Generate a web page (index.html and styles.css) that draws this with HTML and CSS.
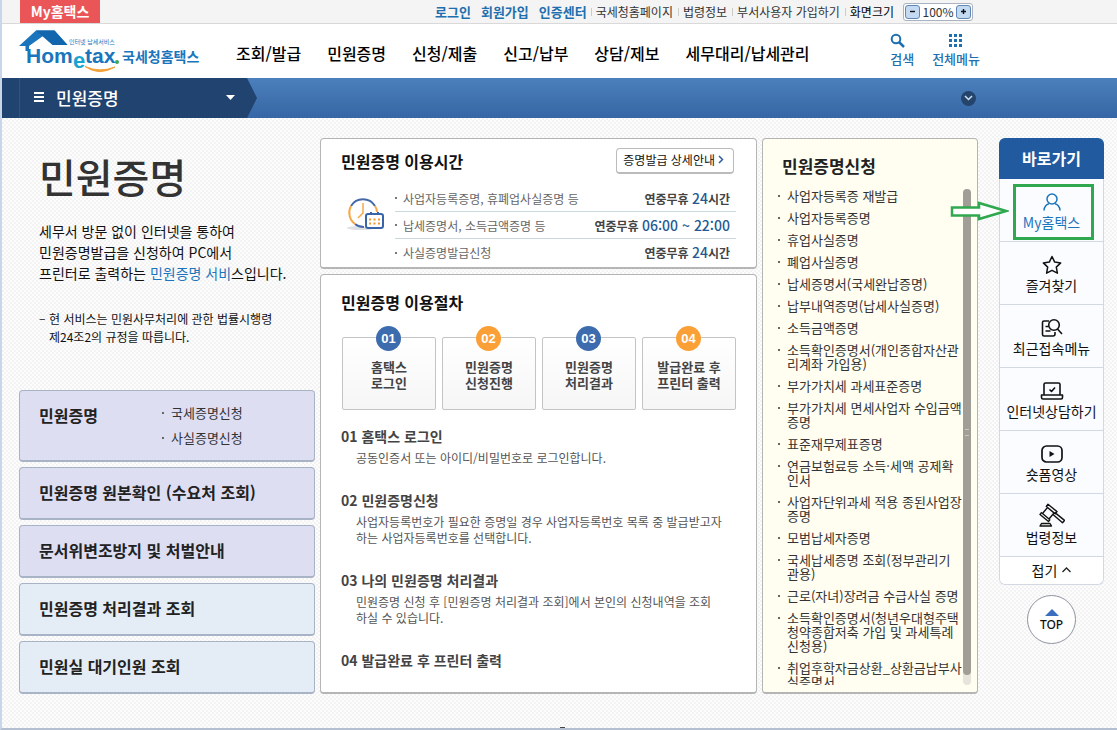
FILE: index.html
```html
<!DOCTYPE html>
<html lang="ko">
<head>
<meta charset="utf-8">
<title>국세청홈택스 - 민원증명</title>
<link rel="stylesheet" href="styles.css">
</head>
<body>
<div class="topbar">
  <a class="my-tab" href="#">My홈택스</a>
  <div class="top-links">
    <a class="strong" href="#">로그인</a>
    <a class="strong" href="#">회원가입</a>
    <a class="strong" href="#">인증센터</a>
    <a class="sep" href="#">국세청홈페이지</a>
    <a class="sep" href="#">법령정보</a>
    <a class="sep" href="#">부서사용자 가입하기</a>
    <span class="sep dark">화면크기</span>
    <div class="zoom">
      <button type="button" aria-label="축소"><svg width="7" height="7"><path d="M1 3.500h5" stroke="#111" stroke-width="1.400"/></svg></button>
      <span>100%</span>
      <button type="button" aria-label="확대"><svg width="7" height="7"><path d="M1 3.500h5M3.500 1v5" stroke="#111" stroke-width="1.400"/></svg></button>
    </div>
  </div>
</div>

<header class="header">
  <a class="logo" href="#" aria-label="국세청홈택스">
    <svg width="180" height="46" viewBox="0 0 180 46">
      <path d="M0 18 17 2.500h18.500L48.500 17H34L24 8 10 18v5H6.500v-5z" fill="#1a75bd"/>
      <path d="M17 2.500h18.500L48.500 17H33.500z" fill="#1166ae"/>
      <text x="50" y="16" class="lg-tag">인터넷 납세서비스</text>
      <text x="7" y="35" class="lg-home">Hom</text>
      <text x="54" y="40" class="lg-e">e</text>
      <text x="66" y="35" class="lg-home">tax</text>
      <circle cx="98" cy="34" r="2" fill="#3aa757"/>
      <path d="M66 38.500Q80 48.500 96 39 81 45 66 38.500z" fill="#f2a13a" stroke="#f2a13a"/>
      <text x="103" y="34" class="lg-kr">국세청홈택스</text>
    </svg>
  </a>
  <nav class="gnb">
    <a href="#">조회/발급</a><a href="#">민원증명</a><a href="#">신청/제출</a><a href="#">신고/납부</a><a href="#">상담/제보</a><a href="#">세무대리/납세관리</a>
  </nav>
  <div class="tools">
    <a href="#"><svg width="16" height="16" viewBox="0 0 16 16" fill="none" stroke="#1f6fae"><circle cx="6" cy="6" r="4.300" stroke-width="2"/><path d="M9 9l5 5" stroke-width="2.500"/></svg>검색</a>
    <a href="#"><svg width="16" height="16" viewBox="0 0 16 16" fill="#1f6fae"><path d="M1 1h3v3H1zM6 1h3v3H6zM11 1h3v3h-3zM1 6h3v3H1zM6 6h3v3H6zM11 6h3v3h-3zM1 11h3v3H1zM6 11h3v3H6zM11 11h3v3h-3z"/></svg>전체메뉴</a>
  </div>
</header>

<div class="subbar">
  <button class="lnb" type="button">
    <svg width="12" height="12" viewBox="0 0 12 12"><path d="M1 2h10M1 6h10M1 10h10" stroke="#fff" stroke-width="2"/></svg>
    <span>민원증명</span>
    <svg width="9" height="5" viewBox="0 0 9 5"><path d="M0 0h9L4.500 5z" fill="#fff"/></svg>
  </button>
  <button class="expand" type="button" aria-label="펼치기"><svg width="9" height="6" viewBox="0 0 9 6" fill="none"><path d="M1 1l3.500 3.500L8 1" stroke="#cfe0f2" stroke-width="1.500"/></svg></button>
</div>

<div class="page">
  <main class="board">
    <section class="left">
      <h1>민원증명</h1>
      <p class="intro">세무서 방문 없이 인터넷을 통하여<br>민원증명발급을 신청하여 PC에서<br>프린터로 출력하는 <em>민원증명 서비</em>스입니다.</p>
      <p class="law">현 서비스는 민원사무처리에 관한 법률시행령<br>제24조2의 규정을 따릅니다.</p>
      <div class="menu">
        <div class="tile tall">
          <a href="#">민원증명</a>
          <ul class="dots"><li><a href="#">국세증명신청</a></li><li><a href="#">사실증명신청</a></li></ul>
        </div>
        <a class="tile" href="#">민원증명 원본확인 (수요처 조회)</a>
        <a class="tile" href="#">문서위변조방지 및 처벌안내</a>
        <a class="tile blue" href="#">민원증명 처리결과 조회</a>
        <a class="tile blue" href="#">민원실 대기인원 조회</a>
      </div>
    </section>

    <div class="middle">
      <section class="card hours">
        <div class="card-head">
          <h2>민원증명 이용시간</h2>
          <button class="more" type="button">증명발급 상세안내<svg width="6" height="9" viewBox="0 0 6 9" fill="none"><path d="M1 1l3.500 3.500L1 8" stroke="#2d5f9e" stroke-width="1.500"/></svg></button>
        </div>
        <div class="hours-body">
          <svg class="clock" width="38" height="34" viewBox="0 0 38 34" fill="none">
            <ellipse cx="14" cy="31" rx="14" ry="2" fill="#dde1e6"/>
            <circle cx="16" cy="16" r="14" fill="#fff"/>
            <path d="M4 9A14 14 0 0 1 28 9M17 30a14 14 0 0 1-9-3" stroke="#4468a8" stroke-width="2"/>
            <path d="M28 9q2 3 2 6M4 9a14 14 0 0 0 4 18" stroke="#f5a94a" stroke-width="2"/>
            <path d="M16 6v10l-5 5" stroke="#f5a94a" stroke-width="1.500"/>
            <rect x="19" y="17" width="17" height="14" rx="2" fill="#fff" stroke="#3a64a8" stroke-width="2"/>
            <path d="M24 15v3M31 15v3" stroke="#3a64a8" stroke-width="2"/>
            <path d="M22 22.500h11M22 26.500h11" stroke="#f09a35" stroke-width="2" stroke-dasharray="2 2.500"/>
          </svg>
          <ul class="rows">
            <li><span class="name">사업자등록증명, 휴폐업사실증명 등</span><span class="time">연중무휴 <b>24</b>시간</span></li>
            <li><span class="name">납세증명서, 소득금액증명 등</span><span class="time">연중무휴 <b>06:00 ~ 22:00</b></span></li>
            <li><span class="name">사실증명발급신청</span><span class="time">연중무휴 <b>24</b>시간</span></li>
          </ul>
        </div>
      </section>

      <section class="card process">
        <h2>민원증명 이용절차</h2>
        <ol class="steps">
          <li><i>01</i>홈택스<br>로그인</li>
          <li class="orange"><i>02</i>민원증명<br>신청진행</li>
          <li><i>03</i>민원증명<br>처리결과</li>
          <li class="orange"><i>04</i>발급완료 후<br>프린터 출력</li>
        </ol>
        <div class="guide">
          <div><h3>01 홈택스 로그인</h3><p>공동인증서 또는 아이디/비밀번호로 로그인합니다.</p></div>
          <div><h3>02 민원증명신청</h3><p>사업자등록번호가 필요한 증명일 경우 사업자등록번호 목록 중 발급받고자<br>하는 사업자등록번호를 선택합니다.</p></div>
          <div><h3>03 나의 민원증명 처리결과</h3><p>민원증명 신청 후 [민원증명 처리결과 조회]에서 본인의 신청내역을 조회<br>하실 수 있습니다.</p></div>
          <div><h3>04 발급완료 후 프린터 출력</h3></div>
        </div>
      </section>
    </div>

    <section class="card apply">
      <h2>민원증명신청</h2>
      <div class="scroller">
        <ul class="dots">
          <li><a href="#">사업자등록증 재발급</a></li>
          <li><a href="#">사업자등록증명</a></li>
          <li><a href="#">휴업사실증명</a></li>
          <li><a href="#">폐업사실증명</a></li>
          <li><a href="#">납세증명서(국세완납증명)</a></li>
          <li><a href="#">납부내역증명(납세사실증명)</a></li>
          <li><a href="#">소득금액증명</a></li>
          <li><a href="#">소득확인증명서(개인종합자산관<br>리계좌 가입용)</a></li>
          <li><a href="#">부가가치세 과세표준증명</a></li>
          <li><a href="#">부가가치세 면세사업자 수입금액<br>증명</a></li>
          <li><a href="#">표준재무제표증명</a></li>
          <li><a href="#">연금보험료등 소득·세액 공제확<br>인서</a></li>
          <li><a href="#">사업자단위과세 적용 종된사업장<br>증명</a></li>
          <li><a href="#">모범납세자증명</a></li>
          <li><a href="#">국세납세증명 조회(정부관리기<br>관용)</a></li>
          <li><a href="#">근로(자녀)장려금 수급사실 증명</a></li>
          <li><a href="#">소득확인증명서(청년우대형주택<br>청약종합저축 가입 및 과세특례<br>신청용)</a></li>
          <li><a href="#">취업후학자금상환_상환금납부사<br>실증명서</a></li>
        </ul>
        <div class="track"><div class="thumb"></div></div>
      </div>
    </section>
  </main>

  <aside class="quick">
    <div class="quick-box">
      <h2>바로가기</h2>
      <a class="on" href="#">
        <svg width="20" height="20" viewBox="0 0 20 20" fill="none" stroke="#1b75bc" stroke-width="1.500"><circle cx="10" cy="7" r="5"/><path d="M2 18.500c0-4 3-6.500 5-6.800M18 18.500c0-4-3-6.500-5-6.800"/></svg>My홈택스
        <svg class="arrow" width="59" height="22" viewBox="0 0 59 22"><path d="M2 7.500h27V3l27 8-27 8v-3.500H2z" fill="#fff" stroke="#2fa84f" stroke-width="2.500"/></svg>
        <span class="mark"></span>
      </a>
      <a href="#"><svg width="20" height="20" viewBox="0 0 20 20" fill="none" stroke="#111" stroke-width="1.500" stroke-linejoin="round"><path d="M10 1.500l2.700 5.600 6 .8-4.400 4.200 1.100 6.100L10 15.300l-5.400 2.900 1.100-6.100L1.300 7.900l6-.8z"/></svg>즐겨찾기</a>
      <a href="#"><svg width="22" height="20" viewBox="0 0 22 20" fill="none" stroke="#111" stroke-width="1.600"><path d="M8 3H3Q1.500 3 1.500 4.500v12Q1.500 18 3 18h9q2 0 2-2v-2"/><circle cx="13" cy="7" r="5.300"/><path d="M16.500 11l4.500 5M4.500 8.500h3M4.500 13h5"/></svg>최근접속메뉴</a>
      <a href="#"><svg width="24" height="20" viewBox="0 0 24 20" fill="none" stroke="#111" stroke-width="1.600" stroke-linejoin="round"><path d="M4 14V3.500Q4 2 5.500 2h13Q20 2 20 3.500V14M1.500 14h21v2.500q0 1.500-1.500 1.500H3q-1.500 0-1.500-1.500zM9.500 8.500l2 2L15 6.500"/></svg>인터넷상담하기</a>
      <a href="#"><svg width="22" height="20" viewBox="0 0 22 20" fill="none" stroke="#111" stroke-width="1.700"><rect x="1" y="2" width="20" height="16" rx="4.500"/><path d="M8.500 7v6l5-3z" fill="#111" stroke="none"/></svg>숏폼영상</a>
      <a href="#"><svg width="26" height="24" viewBox="0 0 26 24" fill="none" stroke="#111" stroke-width="1.400" stroke-linejoin="round"><path d="M8.500 4.500l-5 6 6.500 5.500 5-6zM7.300 3.500L9 1.300l9 7.300-1.700 2.200zM2.800 9.300L1 11.500l8.500 7 1.700-2.200M14 11.500l9.500 8.300 2-2.400-9.800-8M2.500 20.500h8.500L12.500 23H1z"/></svg>법령정보</a>
      <button class="fold" type="button">접기<svg width="9" height="6" viewBox="0 0 9 6" fill="none"><path d="M.5 5l4-4 4 4" stroke="#222" stroke-width="1.300"/></svg></button>
    </div>
    <a class="top" href="#"><svg width="14" height="7" viewBox="0 0 14 7"><path d="M0 7l7-7 7 7z" fill="#3a6fc0"/></svg>TOP</a>
  </aside>
</div>
<span class="grip"></span>
</body>
</html>
```
FILE: styles.css
```css
* { box-sizing: border-box; }
html { background: #f8f8f8; }
body {
  position: relative;
  margin: 0;
  min-height: 100vh;
  display: flex;
  flex-direction: column;
  border-left: 2px solid #c9d5e8;
  border-bottom: 2px solid #b4bfd1;
  font-family: "Noto Sans CJK KR", sans-serif;
  font-size: 12px;
  color: #111;
  background-color: #fdfdfd;
  background-image: conic-gradient(#f3f3f3 25%, transparent 0 50%, #f3f3f3 0 75%, transparent 0);
  background-size: 4px 4px;
}
a { color: inherit; text-decoration: none; }
h1, h2, h3, p, ul, ol { margin: 0; padding: 0; }
ul, ol { list-style: none; }
button { font: inherit; color: inherit; padding: 0; border: 0; background: none; cursor: pointer; }
svg { flex: none; }

.topbar {
  display: flex;
  justify-content: space-between;
  height: 24px;
  padding: 0 144px 0 18px;
  background: #f4f4f4;
  border-bottom: 1px solid #d9d9d9;
}
.my-tab {
  width: 80px;
  background: #ea5658;
  color: #fff;
  font-size: 14px;
  font-weight: 700;
  line-height: 22px;
  text-align: center;
}
.top-links { display: flex; align-items: center; line-height: 20px; color: #333; white-space: nowrap; }
.strong { margin-right: 10px; font-size: 13px; font-weight: 700; color: #1f6fae; }
.strong:nth-child(3) { margin-right: 4px; }
.sep { display: flex; align-items: center; margin-right: 5px; }
.sep::before { content: ""; width: 1px; height: 8px; margin-right: 4px; background: #ccc; }
.dark { margin-right: 9px; color: #000; }
.zoom {
  display: flex;
  align-items: center;
  justify-content: space-between;
  width: 70px;
  height: 18px;
  padding: 0 1px;
  border: 1px solid #aab4c0;
  border-radius: 3px;
  background: #fff;
}
.zoom button {
  display: grid;
  place-items: center;
  width: 15px;
  height: 14px;
  border: 1px solid #5f86b5;
  border-radius: 3px;
  background: #c4daf3;
}

.header { display: flex; align-items: center; height: 54px; padding: 0 137px 0 17px; background: #fff; }
.logo { display: block; height: 46px; margin-right: 37px; }
.lg-tag { font-size: 6px; fill: #1b75bc; }
.lg-home { font: 700 21px "Liberation Sans Narrow", "Liberation Sans", sans-serif; fill: #1a75bd; }
.lg-e { font: 700 22px "Liberation Sans Narrow", "Liberation Sans", sans-serif; fill: #16a5d0; }
.lg-kr { font-size: 14px; font-weight: 700; fill: #1b75bc; }
.gnb { display: flex; gap: 26px; margin-top: 4px; font-size: 16px; font-weight: 500; line-height: 24px; color: #000; white-space: nowrap; }
.tools { display: flex; gap: 18px; margin-left: auto; color: #1f6fae; font-size: 13px; line-height: 20px; font-weight: 500; }
.tools a { display: flex; flex-direction: column; align-items: center; }
.tools a:first-child svg { align-self: flex-start; }

.subbar {
  display: flex;
  align-items: center;
  justify-content: space-between;
  height: 40px;
  padding-right: 139px;
  background: linear-gradient(#4b80bc, #3666a5);
}
.lnb {
  display: flex;
  align-items: center;
  width: 255px;
  height: 40px;
  padding: 0 22px 2px 31px;
  background: linear-gradient(90deg, transparent 17px, #31547f 17px 18px, transparent 18px), #21436f;
  clip-path: polygon(0 0, 245px 0, 100% 50%, 245px 100%, 0 100%);
  color: #fff;
  font-size: 17px;
  font-weight: 500;
}
.lnb span { margin: 0 auto 0 11px; }
.expand { display: grid; place-items: center; width: 15px; height: 15px; margin-right: 2px; border-radius: 50%; background: #24446c; }

.page { display: flex; align-items: flex-start; gap: 21px; padding: 20px 13px 34px 17px; }
.board { flex: 1; min-width: 0; display: grid; grid-template-columns: 296px minmax(0, 1fr) 216px; gap: 5px; }
.left { display: flex; flex-direction: column; }
h1 { padding: 12px 20px 0; font-size: 40px; font-weight: 500; line-height: 52px; color: #333; }
.intro { margin-top: 19px; padding-left: 20px; font-size: 14px; line-height: 21px; white-space: nowrap; }
.intro em { font-style: normal; color: #1b75bc; }
.law { margin: 26px 0 44px; padding-left: 30px; line-height: 18px; white-space: nowrap; }
.law::before { content: "–"; float: left; margin-left: -10px; line-height: 16px; }
.menu { display: flex; flex-direction: column; gap: 5px; margin-top: auto; }
.tile {
  display: flex;
  align-items: center;
  height: 53px;
  padding: 0 19px 2px;
  border: 1px solid #a9b3c6;
  border-bottom-width: 2px;
  border-radius: 4px;
  background: #dedef3;
  color: #222;
  font-size: 16px;
  font-weight: 700;
}
.tall { height: 72px; align-items: flex-start; padding-top: 12px; line-height: 25px; }
.tall > a { width: 122px; }
.tall ul { margin-top: -3px; font-size: 13px; font-weight: 400; color: #333; }
.blue { background: #e4edf5; }
.dots li { position: relative; padding-left: 10px; }
.dots li::before { content: ""; position: absolute; left: 1px; top: 6px; width: 2px; height: 2px; background: #666; }
.tall .dots li::before { top: 12px; }

.middle { display: flex; flex-direction: column; gap: 5px; }
.card { border: 1px solid #b5b5b5; border-bottom-width: 2px; border-radius: 4px; background: #fff; }
.card h2 { font-size: 16px; font-weight: 700; line-height: 24px; color: #111; }
.hours { height: 131px; padding: 9px 20px 0; }
.card-head { display: flex; align-items: center; justify-content: space-between; height: 26px; padding-right: 2px; }
.card-head h2 { white-space: nowrap; }
.more {
  display: flex;
  align-items: center;
  gap: 3px;
  height: 26px;
  padding: 0 9px 2px 6px;
  border: 1px solid #bbb;
  border-bottom-width: 2px;
  border-radius: 4px;
  background: #fff;
}
.hours-body { display: flex; margin-top: 11px; }
.clock { margin: 12px 10px 0 6px; }
.rows { flex: 1; }
.rows li { display: flex; align-items: center; justify-content: space-between; height: 27px; padding-right: 6px; border-bottom: 1px solid #ccd8e0; white-space: nowrap; }
.rows li:last-child { border: 0; }
.name { display: flex; align-items: center; gap: 6px; color: #666; }
.name::before { content: ""; width: 2px; height: 2px; background: #777; }
.time { color: #444; font-weight: 700; line-height: 20px; }
.time b { font-size: 14px; font-weight: 500; color: #235a94; }

.process { flex: 1; padding: 15px 20px 20px; }
.steps { display: grid; grid-template-columns: repeat(4, 1fr); gap: 6px; margin-top: 23px; padding: 0 0 0 1px; }
.steps li {
  position: relative;
  height: 73px;
  padding-top: 21px;
  border: 1px solid #c4c4c4;
  border-radius: 2px;
  background: linear-gradient(#fff, #f6f6f6);
  color: #444;
  font-size: 13px;
  font-weight: 700;
  line-height: 16px;
  text-align: center;
}
.steps i {
  position: absolute;
  top: -12px;
  left: calc(50% - 13px);
  width: 25px;
  height: 25px;
  border-radius: 50%;
  background: #3d6cae;
  color: #fff;
  font: 700 13px/25px "Liberation Sans", sans-serif;
}
.steps .orange i { background: #fba036; }
.guide { display: flex; flex-direction: column; gap: 24px; margin-top: 16px; }
.guide h3 { font-size: 14px; font-weight: 700; line-height: 20px; color: #444; }
.guide p { margin-top: 4px; padding-left: 15px; line-height: 16px; color: #555; white-space: nowrap; }

.apply { display: flex; flex-direction: column; padding: 15px 6px 7px 14px; background: #fffef0; }
.card.apply h2 { padding-left: 5px; font-size: 17px; color: #222; }
.scroller { display: flex; justify-content: space-between; height: 0; flex-grow: 1; margin-top: 11px; overflow: hidden; }
.scroller li { margin-bottom: 8px; font-size: 13px; line-height: 14px; color: #333; white-space: nowrap; }
.track { width: 8px; height: 100%; border-radius: 4px; background: #e6e4db; }
.thumb { display: grid; place-items: center; height: 98%; border-radius: 4px; background: #a19e98; }
.thumb::before { content: ""; width: 4px; height: 5px; border: solid #c9c7c2; border-width: 1px 0; }

.quick { width: 105px; display: flex; flex-direction: column; align-items: center; gap: 10px; }
.quick-box { width: 100%; border: 1px solid #d3d9e3; border-top: 0; border-radius: 6px; background: #fbfcff; }
.quick h2 { margin: 0 -1px; border-radius: 6px 6px 0 0; background: #215a9e; color: #fff; font-size: 16px; font-weight: 700; line-height: 41px; text-align: center; }
.quick-box a {
  position: relative;
  display: flex;
  flex-direction: column;
  align-items: center;
  justify-content: flex-end;
  height: 63px;
  padding-bottom: 9px;
  border-bottom: 1px solid #d3d9e3;
  font-size: 14px;
  line-height: 20px;
  white-space: nowrap;
}
.quick-box .on { color: #1b75bc; }
.mark { position: absolute; inset: 5px 9px 1px 13px; border: 3px solid #2fa84f; }
.arrow { position: absolute; left: -50px; top: 21px; }
.fold { display: flex; align-items: center; justify-content: center; gap: 5px; width: 100%; height: 27px; padding-bottom: 2px; background: #fff; border-radius: 0 0 6px 6px; font-size: 14px; }
.top {
  display: flex;
  flex-direction: column;
  align-items: center;
  gap: 1px;
  width: 49px;
  height: 49px;
  padding-top: 13px;
  border: 1px solid #8f93a0;
  border-radius: 50%;
  background: #fff;
  font: 500 12px/16px "Noto Sans", sans-serif;
}
.grip { position: absolute; left: 50%; bottom: -2px; width: 5px; height: 3px; border: 1px solid #444; border-bottom: 0; background: #fff; }
```
